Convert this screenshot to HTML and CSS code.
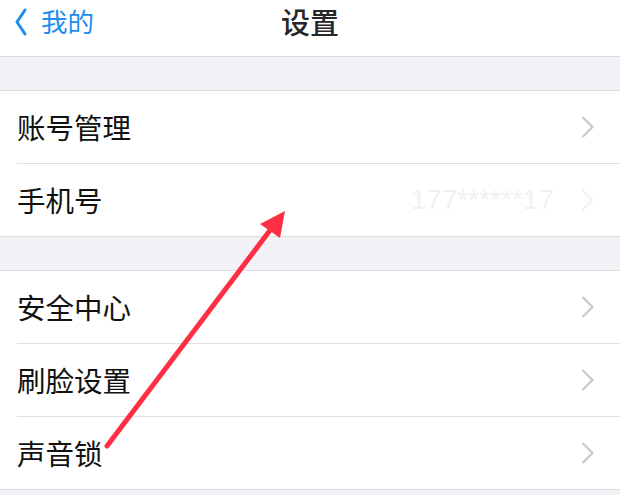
FILE: index.html
```html
<!DOCTYPE html>
<html lang="zh-CN">
<head>
<meta charset="utf-8">
<title>设置</title>
<link rel="stylesheet" href="styles.css">
</head>
<body>
<div class="page">
  <header class="nav">
    <div class="back">
      <svg class="back-icon" width="12" height="28" viewBox="0 0 12 28"><path d="M10 2 L2 14 L10 26" fill="none" stroke="#1d8df0" stroke-width="3" stroke-linecap="round" stroke-linejoin="round"/></svg>
      <span class="back-text">我的</span>
    </div>
    <div class="title">设置</div>
  </header>

  <div class="band band-first"></div>
  <section class="group">
    <div class="row"><span class="label">账号管理</span><svg class="chev" width="14" height="22" viewBox="0 0 14 22"><path d="M2 1.5 L11.5 11 L2 20.5" fill="none" stroke="#c8c8cc" stroke-width="2.2" stroke-linecap="round" stroke-linejoin="round"/></svg></div>
    <div class="row"><span class="label">手机号</span><span class="value">177******17</span><svg class="chev" width="14" height="22" viewBox="0 0 14 22"><path d="M2 1.5 L11.5 11 L2 20.5" fill="none" stroke="#f0f0f2" stroke-width="2.2" stroke-linecap="round" stroke-linejoin="round"/></svg></div>
  </section>

  <div class="band"></div>
  <section class="group">
    <div class="row"><span class="label">安全中心</span><svg class="chev" width="14" height="22" viewBox="0 0 14 22"><path d="M2 1.5 L11.5 11 L2 20.5" fill="none" stroke="#c8c8cc" stroke-width="2.2" stroke-linecap="round" stroke-linejoin="round"/></svg></div>
    <div class="row"><span class="label">刷脸设置</span><svg class="chev" width="14" height="22" viewBox="0 0 14 22"><path d="M2 1.5 L11.5 11 L2 20.5" fill="none" stroke="#c8c8cc" stroke-width="2.2" stroke-linecap="round" stroke-linejoin="round"/></svg></div>
    <div class="row"><span class="label">声音锁</span><svg class="chev" width="14" height="22" viewBox="0 0 14 22"><path d="M2 1.5 L11.5 11 L2 20.5" fill="none" stroke="#c8c8cc" stroke-width="2.2" stroke-linecap="round" stroke-linejoin="round"/></svg></div>
  </section>
  <div class="band"></div>

  <svg class="arrow" width="620" height="495" viewBox="0 0 620 495">
    <line x1="107" y1="446" x2="271" y2="229" stroke="#fe2f44" stroke-width="5" stroke-linecap="round"/>
    <polygon points="285,211 260,224 280,238" fill="#fe2f44"/>
  </svg>
</div>
</body>
</html>
```

FILE: styles.css
```css
html, body {
  margin: 0;
  padding: 0;
  background: #f2f2f6;
}

.page {
  position: relative;
  width: 620px;
  height: 495px;
  overflow: hidden;
  font-family: "Noto Sans CJK SC", "Liberation Sans", sans-serif;
  background: #f2f2f6;
}

.nav {
  position: relative;
  height: 57px;
  background: #ffffff;
  border-bottom: 1px solid #dcdcdf;
  box-sizing: border-box;
}

.back {
  display: flex;
  align-items: center;
  height: 42px;
  padding-left: 15px;
  gap: 14px;
  color: #1d8df0;
}

.back-icon {
  display: block;
  margin-top: 1px;
}

.back-text {
  font-size: 26.5px;
  line-height: 42px;
}

.title {
  position: absolute;
  left: 0;
  right: 0;
  top: 0;
  height: 42px;
  line-height: 42px;
  text-align: center;
  font-size: 29px;
  font-weight: 500;
  color: #262626;
}

.band {
  height: 33px;
  background: #f2f2f6;
}

.band-first {
  height: 33px;
}

.group {
  background: #ffffff;
  border-top: 1px solid #dcdcdf;
  border-bottom: 1px solid #dcdcdf;
}

.row {
  display: flex;
  align-items: center;
  height: 72px;
  margin-left: 17px;
  padding-right: 25px;
}

.row + .row {
  border-top: 1px solid #e0e0e3;
}

.label {
  flex: 1;
  font-size: 28.5px;
  color: #111111;
  margin-top: -1px;
}

.value {
  font-family: "Liberation Sans", sans-serif;
  font-size: 28px;
  color: #f1f1f2;
  margin-right: 27px;
}

.chev {
  display: block;
}

.arrow {
  position: absolute;
  left: 0;
  top: 0;
  pointer-events: none;
}
```
